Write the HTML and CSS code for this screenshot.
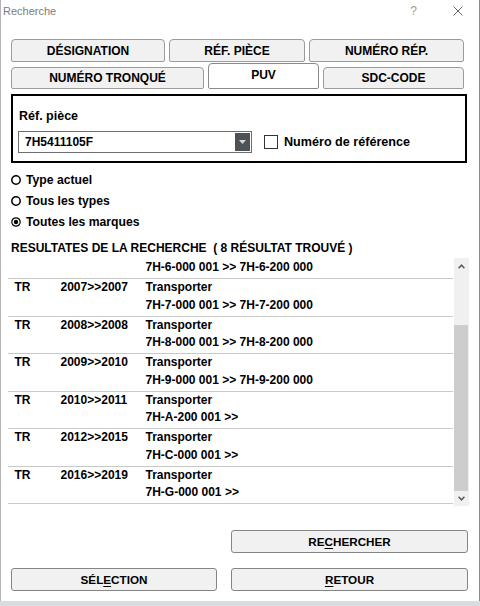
FILE: index.html
```html
<!DOCTYPE html>
<html lang="fr">
<head>
<meta charset="utf-8">
<title>Recherche</title>
<link rel="stylesheet" href="styles.css">
</head>
<body>
<div class="window">
  <div class="titlebar">
    <span class="title">Recherche</span>
    <span class="help">?</span>
    <svg class="close" width="10" height="10" viewBox="0 0 10 10"><path d="M0.5 0.5 L9.5 9.5 M9.5 0.5 L0.5 9.5" stroke="#6a6a6a" stroke-width="1" fill="none"/></svg>
  </div>
  <div class="content">
    <div class="tabs row1">
      <div class="tab t-des">DÉSIGNATION</div>
      <div class="tab t-ref">RÉF. PIÈCE</div>
      <div class="tab t-num">NUMÉRO RÉP.</div>
    </div>
    <div class="tabs row2">
      <div class="tab t-tron">NUMÉRO TRONQUÉ</div>
      <div class="tab t-puv active">PUV</div>
      <div class="tab t-sdc">SDC-CODE</div>
    </div>
    <div class="panel">
      <div class="panel-label">Réf. pièce</div>
      <div class="ref-row">
        <div class="combo">
          <span class="combo-text">7H5411105F</span>
          <span class="combo-btn"><svg width="7" height="4" viewBox="0 0 7 4"><path d="M0 0 H7 L3.5 4 Z" fill="#d8d8d8"/></svg></span>
        </div>
        <span class="check"></span>
        <span class="check-label">Numéro de référence</span>
      </div>
    </div>
    <div class="radios">
      <div class="radio"><svg width="10" height="10" viewBox="0 0 10 10"><circle cx="5" cy="5" r="4.2" fill="none" stroke="#000" stroke-width="1.5"/></svg><span>Type actuel</span></div>
      <div class="radio"><svg width="10" height="10" viewBox="0 0 10 10"><circle cx="5" cy="5" r="4.2" fill="none" stroke="#000" stroke-width="1.5"/></svg><span>Tous les types</span></div>
      <div class="radio"><svg width="10" height="10" viewBox="0 0 10 10"><circle cx="5" cy="5" r="4.2" fill="none" stroke="#000" stroke-width="1.2"/><circle cx="5" cy="5" r="2.2" fill="#000"/></svg><span>Toutes les marques</span></div>
    </div>
    <div class="heading">RESULTATES DE LA RECHERCHE&nbsp; ( 8 RÉSULTAT TROUVÉ )</div>
    <div class="list">
      <div class="rows">
        <div class="row partial"><span class="range">7H-6-000 001 &gt;&gt; 7H-6-200 000</span></div>
        <div class="row"><span>TR</span><span>2007&gt;&gt;2007</span><span>Transporter</span><span class="range">7H-7-000 001 &gt;&gt; 7H-7-200 000</span></div>
        <div class="row"><span>TR</span><span>2008&gt;&gt;2008</span><span>Transporter</span><span class="range">7H-8-000 001 &gt;&gt; 7H-8-200 000</span></div>
        <div class="row"><span>TR</span><span>2009&gt;&gt;2010</span><span>Transporter</span><span class="range">7H-9-000 001 &gt;&gt; 7H-9-200 000</span></div>
        <div class="row"><span>TR</span><span>2010&gt;&gt;2011</span><span>Transporter</span><span class="range">7H-A-200 001 &gt;&gt;</span></div>
        <div class="row"><span>TR</span><span>2012&gt;&gt;2015</span><span>Transporter</span><span class="range">7H-C-000 001 &gt;&gt;</span></div>
        <div class="row"><span>TR</span><span>2016&gt;&gt;2019</span><span>Transporter</span><span class="range">7H-G-000 001 &gt;&gt;</span></div>
      </div>
      <div class="scrollbar">
        <div class="sb-btn up"><svg width="7" height="5" viewBox="0 0 7 5"><path d="M0.6 4.2 L3.5 1.2 L6.4 4.2" fill="none" stroke="#5a5a5a" stroke-width="1.5"/></svg></div>
        <div class="sb-track"><div class="sb-thumb"></div></div>
        <div class="sb-btn down"><svg width="7" height="5" viewBox="0 0 7 5"><path d="M0.6 0.8 L3.5 3.8 L6.4 0.8" fill="none" stroke="#5a5a5a" stroke-width="1.5"/></svg></div>
      </div>
    </div>
    <div class="actions">
      <div class="btn btn-search">RE<u>C</u>HERCHER</div>
      <div class="btn">SÉL<u>E</u>CTION</div>
      <div class="btn"><u>R</u>ETOUR</div>
    </div>
  </div>
</div>
</body>
</html>
```

FILE: styles.css
```css
html, body {
  margin: 0;
  padding: 0;
}

body {
  width: 480px;
  height: 606px;
  overflow: hidden;
  background: #d9dde2;
  font-family: "Liberation Sans", Arial, sans-serif;
  font-size: 12px;
  font-weight: bold;
  color: #000;
}

.window {
  width: 480px;
  height: 601px;
  box-sizing: border-box;
  background: #fff;
  border-left: 1px solid #b4b4b4;
  border-right: 1px solid #8c8c8c;
}

.titlebar {
  height: 22px;
  display: flex;
  align-items: center;
  padding-left: 2px;
  padding-bottom: 1px;
  font-weight: normal;
  font-size: 11px;
  color: #7c7c7c;
}

.help {
  margin-left: auto;
  margin-right: 36px;
  font-size: 12px;
  color: #9a9a9a;
}

.close {
  margin-right: 16px;
}

.content {
  padding: 0 11px 0 10px;
}

.tabs {
  display: flex;
  gap: 4px;
}

.row1 {
  margin-top: 16px;
  height: 23px;
}

.row2 {
  margin-top: 1px;
  height: 26px;
  align-items: flex-end;
}

.tab {
  box-sizing: border-box;
  border: 1px solid #9b9b9b;
  border-radius: 4px 4px 2px 2px;
  background: #f1f1f1;
  display: flex;
  align-items: center;
  justify-content: center;
  flex-shrink: 0;
}

.row1 .tab { height: 23px; }
.row2 .tab { height: 22px; }

.t-des { width: 154px; }
.t-ref { width: 136px; }
.t-num { width: 155px; }
.t-tron { width: 193px; }
.t-puv { width: 111px; }
.t-sdc { width: 141px; }

.row2 .tab.active {
  height: 26px;
  background: #fff;
  border-color: #8a8a8a;
  padding-bottom: 2px;
}

.panel {
  margin-top: 5px;
  width: 456px;
  height: 69px;
  box-sizing: border-box;
  border: 2px solid #000;
  padding: 13px 0 0 5px;
}

.panel-label {
  line-height: 14px;
  padding-left: 1px;
  font-size: 12.5px;
}

.ref-row {
  display: flex;
  align-items: center;
  margin-top: 8px;
  height: 22px;
}

.combo {
  width: 234px;
  height: 22px;
  box-sizing: border-box;
  border: 1px solid #6e6e6e;
  padding: 1px;
  display: flex;
  align-items: center;
}

.combo-text {
  flex: 1;
  padding-left: 5px;
}

.combo-btn {
  width: 15px;
  height: 100%;
  background: #4d5257;
  display: flex;
  align-items: center;
  justify-content: center;
}

.check {
  width: 14px;
  height: 14px;
  box-sizing: border-box;
  border: 1px solid #333;
  margin-left: 12px;
  margin-right: 6px;
}

.check-label {
  font-size: 12.6px;
}

.radios {
  margin-top: 6px;
}

.radio {
  display: flex;
  align-items: center;
  gap: 5px;
  height: 21px;
  font-size: 12.2px;
}

.heading {
  margin-top: 9px;
  line-height: 14px;
}

.list {
  margin-top: 3px;
  margin-left: -3px;
  width: 461px;
  height: 248px;
  display: flex;
  gap: 1px;
}

.rows {
  width: 445px;
  flex-shrink: 0;
}

.row {
  box-sizing: border-box;
  height: 37.5px;
  border-bottom: 1px solid #c9c9c9;
  display: grid;
  grid-template-columns: 46px 85px 1fr;
  grid-auto-rows: 17.5px;
  line-height: 17.5px;
  padding-left: 6.5px;
  white-space: nowrap;
}

.row.partial {
  height: 21px;
  padding-top: 1px;
}

.range {
  grid-column: 3;
}

.scrollbar {
  width: 15px;
  flex-shrink: 0;
  height: 248px;
  background: #f0f0f0;
  display: flex;
  flex-direction: column;
}

.sb-btn {
  height: 16px;
  display: flex;
  align-items: center;
  justify-content: center;
}

.sb-btn.down {
  height: 15px;
}

.sb-track {
  height: 217px;
}

.sb-thumb {
  margin-top: 51px;
  width: 14px;
  height: 166px;
  background: #cdcdcd;
}

.actions {
  display: grid;
  grid-template-columns: 206px 237px;
  column-gap: 14px;
  row-gap: 15px;
  margin-top: 24px;
}

.btn {
  height: 23px;
  box-sizing: border-box;
  border: 1px solid #858585;
  border-radius: 3px;
  background: #f1f1f1;
  display: flex;
  align-items: center;
  justify-content: center;
  font-size: 11.7px;
}

.btn-search {
  grid-column: 2;
}

.btn u {
  text-underline-offset: 2px;
}
```
